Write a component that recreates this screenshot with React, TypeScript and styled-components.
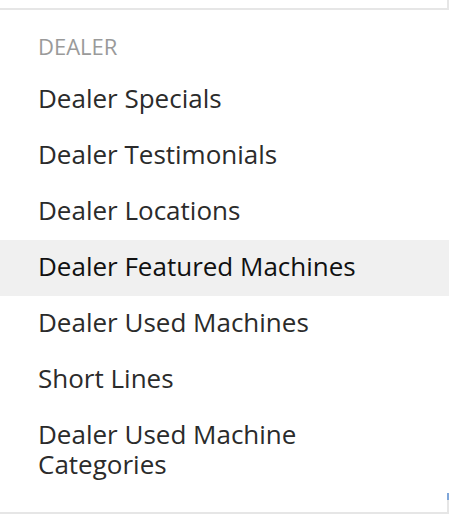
import React from "react";
import styled, { createGlobalStyle } from "styled-components";

const Global = createGlobalStyle`
  html, body { margin: 0; padding: 0; background: #ffffff; }
  body { font-family: "Open Sans", "Noto Sans", sans-serif; -webkit-font-smoothing: antialiased; }
`;

const Page = styled.div`
  width: 450px;
  height: 522px;
  overflow: hidden;
  background: #ffffff;
`;

const TopBox = styled.div`
  width: 449px;
  height: 10px;
  box-sizing: border-box;
  border-right: 2px solid #e6e6e6;
  border-bottom: 2px solid #e6e6e6;
`;

const Panel = styled.div`
  position: relative;
  width: 449px;
  box-sizing: border-box;
  padding: 21px 0 18px;
  border-bottom: 2px solid #e6e6e6;
`;

const Header = styled.div`
  padding: 0 38px;
  margin-bottom: 11px;
  font-size: 22px;
  line-height: 30px;
  color: #9a9a9a;
  text-transform: uppercase;
`;

const List = styled.ul`
  list-style: none;
  margin: 0;
  padding: 0;
`;

const Item = styled.li<{ $active?: boolean }>`
  padding: 11px 38px 15px;
  font-size: 26px;
  line-height: 30px;
  color: ${(p) => (p.$active ? "#111111" : "#2b2b2b")};
  background: ${(p) => (p.$active ? "#f0f0f0" : "transparent")};
`;

const Scroll = styled.div`
  position: absolute;
  right: 0;
  bottom: 0;
  width: 2px;
  height: 19px;
  background: #e6e6e6;
  &::before {
    content: "";
    display: block;
    height: 7px;
    background: #7fa6d9;
  }
`;

const items = [
  "Dealer Specials",
  "Dealer Testimonials",
  "Dealer Locations",
  "Dealer Featured Machines",
  "Dealer Used Machines",
  "Short Lines",
  "Dealer Used Machine Categories",
];

export default function App() {
  return (
    <Page>
      <Global />
      <TopBox />
      <Panel>
        <Header>Dealer</Header>
        <List>
          {items.map((t) => (
            <Item key={t} $active={t === "Dealer Featured Machines"}>
              {t}
            </Item>
          ))}
        </List>
        <Scroll />
      </Panel>
    </Page>
  );
}
